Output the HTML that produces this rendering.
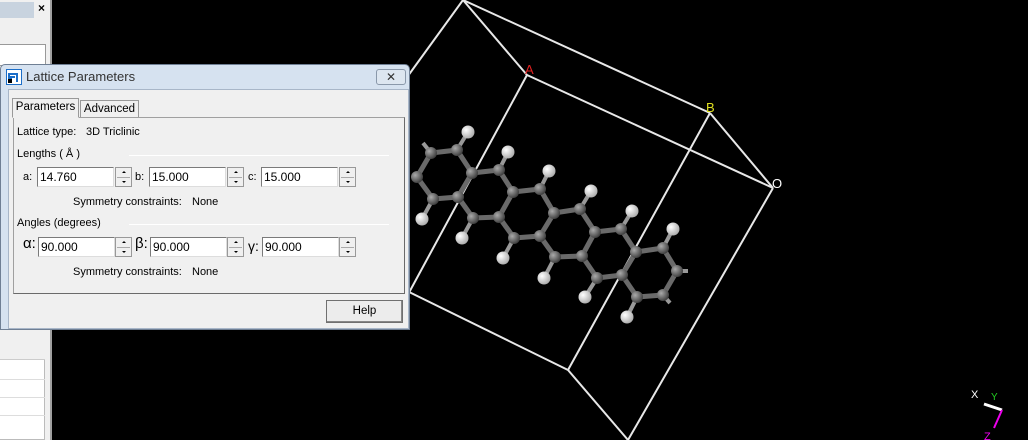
<!DOCTYPE html>
<html><head><meta charset="utf-8"><style>
*{margin:0;padding:0;box-sizing:border-box}
body{width:1028px;height:440px;overflow:hidden;background:#000;position:relative;font-family:"Liberation Sans",sans-serif;font-size:11px;color:#000}
.abs{position:absolute}
.lp{left:0;top:0;width:52px;height:440px;background:#f0f0f0;border-right:2px solid #a0a0a0}
.dlg{left:0;top:64px;width:410px;height:266px;background:#d6e2f0;border:1px solid #6f7f94;border-radius:5px 5px 0 0}
.title{left:25px;top:4px;font-size:13px;color:#333}
.body{left:7px;top:24px;width:401px;height:240px;background:#f0f0f0;border:1px solid #a8b6c8}
.panel{left:4px;top:27px;width:392px;height:177px;border:1px solid #a0a0a0;border-right-color:#6a6a6a;border-bottom-color:#6a6a6a;background:#f0f0f0}
.tab{background:#f0f0f0;border:1px solid #999;border-bottom:none;padding:2px 0;text-align:center;font-size:11.5px}
.inp{background:#fff;border:1px solid #7a7a7a;border-right-color:#ddd;border-bottom-color:#ddd;height:20px;width:77px;padding:1px 2px;font-size:12px;font-family:"Liberation Sans",sans-serif}
.spin{width:17px;height:20px;border:1px solid #999;background:#f0f0f0}
.spin:after{content:"";position:absolute;left:1px;right:1px;top:9px;border-top:1px solid #aaa}
.spin:before{content:"";position:absolute;left:6px;top:3px;border:2px solid transparent;border-bottom-color:#000;border-top:none}
.dn{position:absolute;left:6px;top:13px;border:2px solid transparent;border-top-color:#000;border-bottom:none}
.sep{height:1px;background:#a0a0a0;border-bottom:1px solid #fff}
.btn{border:1px solid #707070;background:#ececec;text-align:center;line-height:21px;box-shadow:inset -1px -1px #888}
</style></head><body>
<div class="abs lp">
 <div class="abs" style="left:0;top:2px;width:34px;height:16px;background:#c8d3df"></div>
 <div class="abs" style="left:38px;top:1px;font-weight:bold;font-size:12px">×</div>
 <div class="abs" style="left:0;top:44px;width:46px;height:22px;background:#fff;border:1px solid #999;border-left:none"></div>
 <div class="abs" style="left:0;top:340px;width:45px;height:100px;background:#fff;border:1px solid #bbb;border-left:none"></div>
 <div class="abs" style="left:0;top:340px;width:45px;height:20px;background:#f0f0f0;border-bottom:1px solid #ccc"></div>
 <div class="abs" style="left:0;top:379px;width:45px;height:1px;background:#ddd"></div>
 <div class="abs" style="left:0;top:397px;width:45px;height:1px;background:#ddd"></div>
 <div class="abs" style="left:0;top:415px;width:45px;height:1px;background:#ddd"></div>
</div>
<svg class="abs" style="left:0;top:0" width="1028" height="440">
<g stroke="#e8e8e8" stroke-width="2" fill="none">
<line x1="463" y1="0" x2="527" y2="75"/><line x1="463" y1="0" x2="710" y2="113"/><line x1="463" y1="0" x2="405" y2="80"/>
<line x1="527" y1="75" x2="773" y2="188"/><line x1="710" y1="113" x2="773" y2="188"/>
<line x1="527" y1="75" x2="405" y2="300"/><line x1="710" y1="113" x2="568" y2="370"/><line x1="773" y1="188" x2="628" y2="440"/>
<line x1="405" y1="290" x2="568" y2="370"/><line x1="568" y1="370" x2="628" y2="440"/>
</g>
<text x="525" y="74" fill="#e02020" font-size="13" font-family="Liberation Sans">A</text>
<text x="706" y="112" fill="#e0e020" font-size="13" font-family="Liberation Sans">B</text>
<text x="772" y="188" fill="#fff" font-size="13" font-family="Liberation Sans">O</text>
<g id="mol"></g>
<text x="971" y="398" fill="#fff" font-size="11" font-family="Liberation Sans">X</text>
<text x="991" y="400" fill="#2c2" font-size="10" font-family="Liberation Sans">Y</text>
<line x1="984" y1="404" x2="1002" y2="410" stroke="#fff" stroke-width="3"/>
<line x1="1002" y1="410" x2="994" y2="428" stroke="#e0e" stroke-width="2"/>
<text x="984" y="440" fill="#e0e" font-size="11" font-family="Liberation Sans">Z</text>
</svg>
<div class="abs dlg">
 <svg class="abs" style="left:5px;top:4px" width="16" height="16"><rect x="0.5" y="0.5" width="15" height="15" fill="#fff" stroke="#1c6ec8"/><path d="M3 13V5h8v8" fill="none" stroke="#1c6ec8" stroke-width="2"/><path d="M5 13V8h4" fill="none" stroke="#1c6ec8" stroke-width="2"/><rect x="2" y="10" width="4" height="4" fill="#000"/></svg>
 <div class="abs title">Lattice Parameters</div>
 <div class="abs" style="left:375px;top:4px;width:30px;height:16px;border:1px solid #8a98aa;border-radius:3px;background:#dde6f0;text-align:center;font-size:12px;line-height:14px;color:#333">✕</div>
 <div class="abs body">
  <div class="abs panel">
   <div class="abs" style="left:3px;top:8px">Lattice type:</div>
   <div class="abs" style="left:72px;top:8px">3D Triclinic</div>
   <div class="abs" style="left:3px;top:30px">Lengths ( Å )</div>
   <div class="abs sep" style="left:115px;top:37px;width:260px"></div>
   <div class="abs" style="left:9px;top:53px">a:</div>
   <input class="abs inp" style="left:23px;top:49px" value="14.760">
   <div class="abs spin" style="left:101px;top:49px"><i class="dn"></i></div>
   <div class="abs" style="left:121px;top:53px">b:</div>
   <input class="abs inp" style="left:135px;top:49px" value="15.000">
   <div class="abs spin" style="left:213px;top:49px"><i class="dn"></i></div>
   <div class="abs" style="left:234px;top:53px">c:</div>
   <input class="abs inp" style="left:247px;top:49px" value="15.000">
   <div class="abs spin" style="left:325px;top:49px"><i class="dn"></i></div>
   <div class="abs" style="left:59px;top:78px">Symmetry constraints:</div>
   <div class="abs" style="left:178px;top:78px">None</div>
   <div class="abs" style="left:3px;top:99px">Angles (degrees)</div>
   <div class="abs sep" style="left:115px;top:106px;width:260px"></div>
   <div class="abs" style="left:9px;top:117px;font-size:15px">α:</div>
   <input class="abs inp" style="left:24px;top:119px;width:77px" value="90.000">
   <div class="abs spin" style="left:101px;top:119px"><i class="dn"></i></div>
   <div class="abs" style="left:121px;top:117px;font-size:15px">β:</div>
   <input class="abs inp" style="left:136px;top:119px;width:77px" value="90.000">
   <div class="abs spin" style="left:213px;top:119px"><i class="dn"></i></div>
   <div class="abs" style="left:234px;top:120px;font-size:14px">γ:</div>
   <input class="abs inp" style="left:248px;top:119px;width:77px" value="90.000">
   <div class="abs spin" style="left:325px;top:119px"><i class="dn"></i></div>
   <div class="abs" style="left:59px;top:148px">Symmetry constraints:</div>
   <div class="abs" style="left:178px;top:148px">None</div>
  </div>
  <div class="abs tab" style="left:3px;top:8px;width:67px;height:20px;border-bottom:1px solid #f0f0f0;z-index:2">Parameters</div>
  <div class="abs tab" style="left:71px;top:10px;width:59px;height:17px">Advanced</div>
  <div class="abs btn" style="left:317px;top:210px;width:77px;height:23px;font-size:11.5px">Help</div>
 </div>
</div>
<script>
var C=[[431,153],[457,150],[417,177],[433,199],[458,197],[472,173],[499,170],[513,192],[499,217],[473,218],[540,189],[554,213],[540,236],[514,238],[580,209],[595,232],[582,256],[555,257],[621,229],[636,252],[622,275],[597,278],[663,248],[677,271],[663,295],[637,297]];
var H=[[468,132],[508,152],[549,171],[591,191],[632,211],[673,229],[422,219],[462,238],[503,258],[544,278],[585,297],[627,317],[423,143],[688,271],[670,303]];
var s='';
function d(a,b){return Math.hypot(a[0]-b[0],a[1]-b[1])}
for(var i=0;i<C.length;i++){for(var j=i+1;j<C.length;j++)if(d(C[i],C[j])<31)s+='<line x1="'+C[i][0]+'" y1="'+C[i][1]+'" x2="'+C[j][0]+'" y2="'+C[j][1]+'" stroke="#6a6a6a" stroke-width="5"/>';
for(var k=0;k<H.length;k++)if(d(C[i],H[k])<24)s+='<line x1="'+C[i][0]+'" y1="'+C[i][1]+'" x2="'+H[k][0]+'" y2="'+H[k][1]+'" stroke="#999" stroke-width="4"/>';}
s+='<defs><radialGradient id="gc" cx="0.35" cy="0.35" r="0.7"><stop offset="0" stop-color="#aaa"/><stop offset="1" stop-color="#3a3a3a"/></radialGradient><radialGradient id="gh" cx="0.35" cy="0.35" r="0.7"><stop offset="0" stop-color="#fff"/><stop offset="1" stop-color="#aaa"/></radialGradient></defs>';
C.forEach(function(p){s+='<circle cx="'+p[0]+'" cy="'+p[1]+'" r="6" fill="url(#gc)"/>'});
H.forEach(function(p,i){if(i<12)s+='<circle cx="'+p[0]+'" cy="'+p[1]+'" r="6.5" fill="url(#gh)"/>'});
document.getElementById('mol').innerHTML=s;
</script>
</body></html>
